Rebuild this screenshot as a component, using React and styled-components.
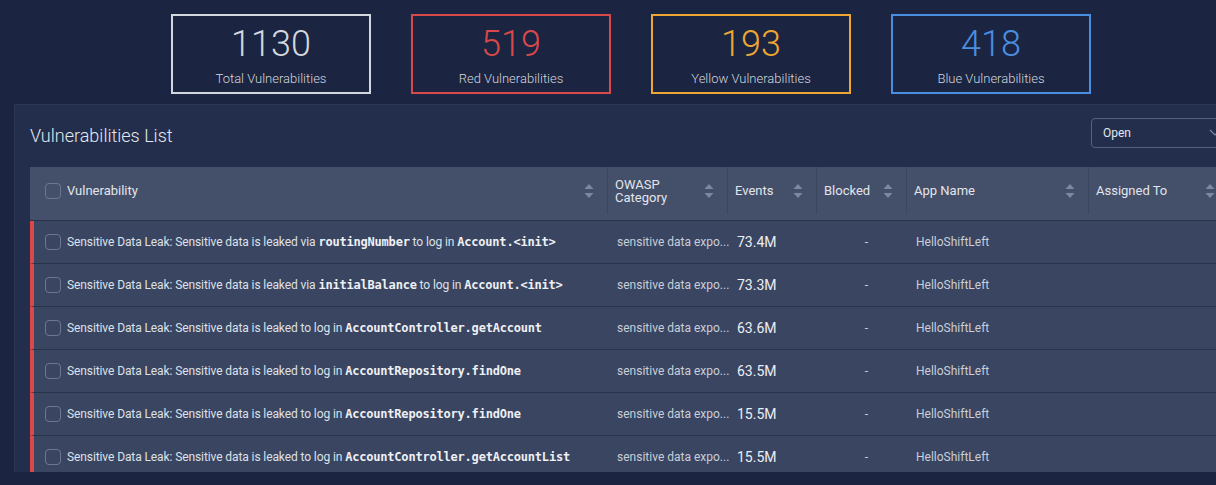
import React from 'react';
import styled, { createGlobalStyle } from 'styled-components';

const GlobalStyle = createGlobalStyle`
  html, body {
    margin: 0;
    padding: 0;
    background: #1b2440;
    overflow: hidden;
  }
  body {
    font-family: Roboto, "Liberation Sans", sans-serif;
    color: #d6dae3;
  }
`;

const stats = [
  { value: '1130', label: 'Total Vulnerabilities', color: '#d3d7df' },
  { value: '519', label: 'Red Vulnerabilities', color: '#d9484b' },
  { value: '193', label: 'Yellow Vulnerabilities', color: '#eea633' },
  { value: '418', label: 'Blue Vulnerabilities', color: '#4a8ee0' },
];

const rows = [
  { pre: 'Sensitive Data Leak: Sensitive data is leaked via ', code: 'routingNumber', mid: ' to log in ', target: 'Account.<init>', events: '73.4M' },
  { pre: 'Sensitive Data Leak: Sensitive data is leaked via ', code: 'initialBalance', mid: ' to log in ', target: 'Account.<init>', events: '73.3M' },
  { pre: 'Sensitive Data Leak: Sensitive data is leaked to log in ', target: 'AccountController.getAccount', events: '63.6M' },
  { pre: 'Sensitive Data Leak: Sensitive data is leaked to log in ', target: 'AccountRepository.findOne', events: '63.5M' },
  { pre: 'Sensitive Data Leak: Sensitive data is leaked to log in ', target: 'AccountRepository.findOne', events: '15.5M' },
  { pre: 'Sensitive Data Leak: Sensitive data is leaked to log in ', target: 'AccountController.getAccountList', events: '15.5M' },
];

const columns = [
  { key: 'vuln', label: 'Vulnerability', width: 578, check: true },
  { key: 'owasp', label: 'OWASP Category', width: 120 },
  { key: 'events', label: 'Events', width: 89 },
  { key: 'blocked', label: 'Blocked', width: 90 },
  { key: 'app', label: 'App Name', width: 182 },
  { key: 'assigned', label: 'Assigned To', width: 140 },
];

function App() {
  return (
    <Page>
      <GlobalStyle />
      <Stats>
        {stats.map((s) => (
          <StatCard key={s.label} $color={s.color}>
            <StatValue $color={s.color}>{s.value}</StatValue>
            <StatLabel>{s.label}</StatLabel>
          </StatCard>
        ))}
      </Stats>

      <Panel>
        <TitleRow>
          <Title>Vulnerabilities List</Title>
          <Select>
            <span>Open</span>
            <Chevron viewBox="0 0 12 8">
              <path d="M1 1l5 5 5-5" fill="none" stroke="#7f89a0" strokeWidth="1.2" />
            </Chevron>
          </Select>
        </TitleRow>

        <Table>
          <HeaderRow>
            {columns.map((c) => (
              <HeadCell key={c.key} $w={c.width}>
                {c.check && <Checkbox />}
                <HeadLabel $narrow={c.key === 'owasp'}>{c.label}</HeadLabel>
                <SortIcon viewBox="0 0 10 16">
                  <path d="M5 1l4.5 5h-9z" fill="#7d879d" />
                  <path d="M5 15l4.5-5h-9z" fill="#7d879d" />
                </SortIcon>
              </HeadCell>
            ))}
          </HeaderRow>
          {rows.map((r, i) => (
            <Row key={i}>
              <VulnCell $w={columns[0].width}>
                <Checkbox />
                <VulnText>
                  {r.pre}
                  {r.code && <Code>{r.code}</Code>}
                  {r.mid}
                  <Code>{r.target}</Code>
                </VulnText>
              </VulnCell>
              <Cell $w={columns[1].width}>
                <Muted>sensitive data expo...</Muted>
              </Cell>
              <Cell $w={columns[2].width}>
                <Events>{r.events}</Events>
              </Cell>
              <Cell $w={columns[3].width} $center>
                <Muted>-</Muted>
              </Cell>
              <Cell $w={columns[4].width}>
                <Muted>HelloShiftLeft</Muted>
              </Cell>
              <Cell $w={columns[5].width} />
            </Row>
          ))}
        </Table>
      </Panel>
    </Page>
  );
}

const Page = styled.div`
  width: 1216px;
  height: 485px;
  overflow: hidden;
  background: #1b2440;
`;

const Stats = styled.div`
  display: flex;
  gap: 40px;
  padding: 14px 0 0 171px;
  height: 104px;
  box-sizing: border-box;
`;

const StatCard = styled.div`
  width: 200px;
  height: 80px;
  box-sizing: border-box;
  border: 2px solid ${(p) => p.$color};
  display: flex;
  flex-direction: column;
  align-items: center;
`;

const StatValue = styled.div`
  color: ${(p) => p.$color};
  font-size: 36px;
  font-weight: 300;
  line-height: 40px;
  margin-top: 8px;
`;

const StatLabel = styled.div`
  color: #d2d6df;
  font-size: 13px;
  font-weight: 300;
  margin-top: 7px;
`;

const Panel = styled.div`
  margin: 0 0 0 14px;
  width: 1240px;
  height: 368px;
  box-sizing: border-box;
  background: #222e4c;
  border-top: 1px solid #2c3858;
  border-left: 1px solid #2c3858;
  padding: 13px 0 0 15px;
  overflow: hidden;
`;

const TitleRow = styled.div`
  display: flex;
  align-items: flex-start;
  justify-content: space-between;
  height: 49px;
  width: 1201px;
`;

const Title = styled.h2`
  margin: 0;
  font-size: 18px;
  font-weight: 300;
  line-height: 36px;
  color: #e4e7ee;
`;

const Select = styled.div`
  width: 140px;
  height: 30px;
  box-sizing: border-box;
  border: 1px solid #56617c;
  border-radius: 4px;
  display: flex;
  align-items: center;
  padding-left: 11px;
  font-size: 12px;
  color: #e4e7ee;
  gap: 78px;
`;

const Chevron = styled.svg`
  width: 12px;
  height: 8px;
`;

const Table = styled.div`
  width: 1250px;
`;

const HeaderRow = styled.div`
  display: flex;
  height: 54px;
  background: #444f69;
  border-bottom: 1px solid #27324d;
  box-sizing: border-box;
  padding-bottom: 6px;
`;

const HeadCell = styled.div`
  width: ${(p) => p.$w}px;
  flex-shrink: 0;
  display: flex;
  align-items: center;
  box-sizing: border-box;
  padding: 0 13px 0 ${(p) => (p.$w > 300 ? 15 : 7)}px;
  border-right: 1px solid #3a4560;
  gap: 6px;
`;

const HeadLabel = styled.span`
  flex: 1;
  font-size: 13px;
  color: #e2e5ec;
  line-height: 13px;
  max-width: ${(p) => (p.$narrow ? '60px' : 'none')};
  margin-right: ${(p) => (p.$narrow ? 'auto' : '0')};
`;

const SortIcon = styled.svg`
  width: 10px;
  height: 16px;
  flex-shrink: 0;
`;

const Row = styled.div`
  display: flex;
  height: 43px;
  background: #3a4561;
  border-bottom: 1px solid #27324d;
  border-left: 4px solid #d9484b;
  box-sizing: border-box;
`;

const Cell = styled.div`
  width: ${(p) => p.$w}px;
  flex-shrink: 0;
  display: flex;
  align-items: center;
  justify-content: ${(p) => (p.$center ? 'center' : 'flex-start')};
  box-sizing: border-box;
  padding-left: 9px;
`;

const VulnCell = styled(Cell)`
  width: ${(p) => p.$w - 4}px;
  padding-left: 11px;
  gap: 6px;
`;

const Checkbox = styled.span`
  width: 16px;
  height: 16px;
  box-sizing: border-box;
  border: 1.5px solid #6c7792;
  border-radius: 4px;
  flex-shrink: 0;
`;

const VulnText = styled.span`
  font-size: 12px;
  color: #dde1e8;
  white-space: nowrap;
  letter-spacing: -0.1px;
`;

const Code = styled.span`
  font-family: "DejaVu Sans Mono", "Liberation Mono", monospace;
  font-size: 12px;
  font-weight: 600;
  letter-spacing: -0.2px;
  color: #eef0f4;
`;

const Muted = styled.span`
  font-size: 12px;
  color: #c9ced9;
  white-space: nowrap;
`;

const Events = styled.span`
  font-size: 14px;
  color: #eceef3;
`;

export default App;
